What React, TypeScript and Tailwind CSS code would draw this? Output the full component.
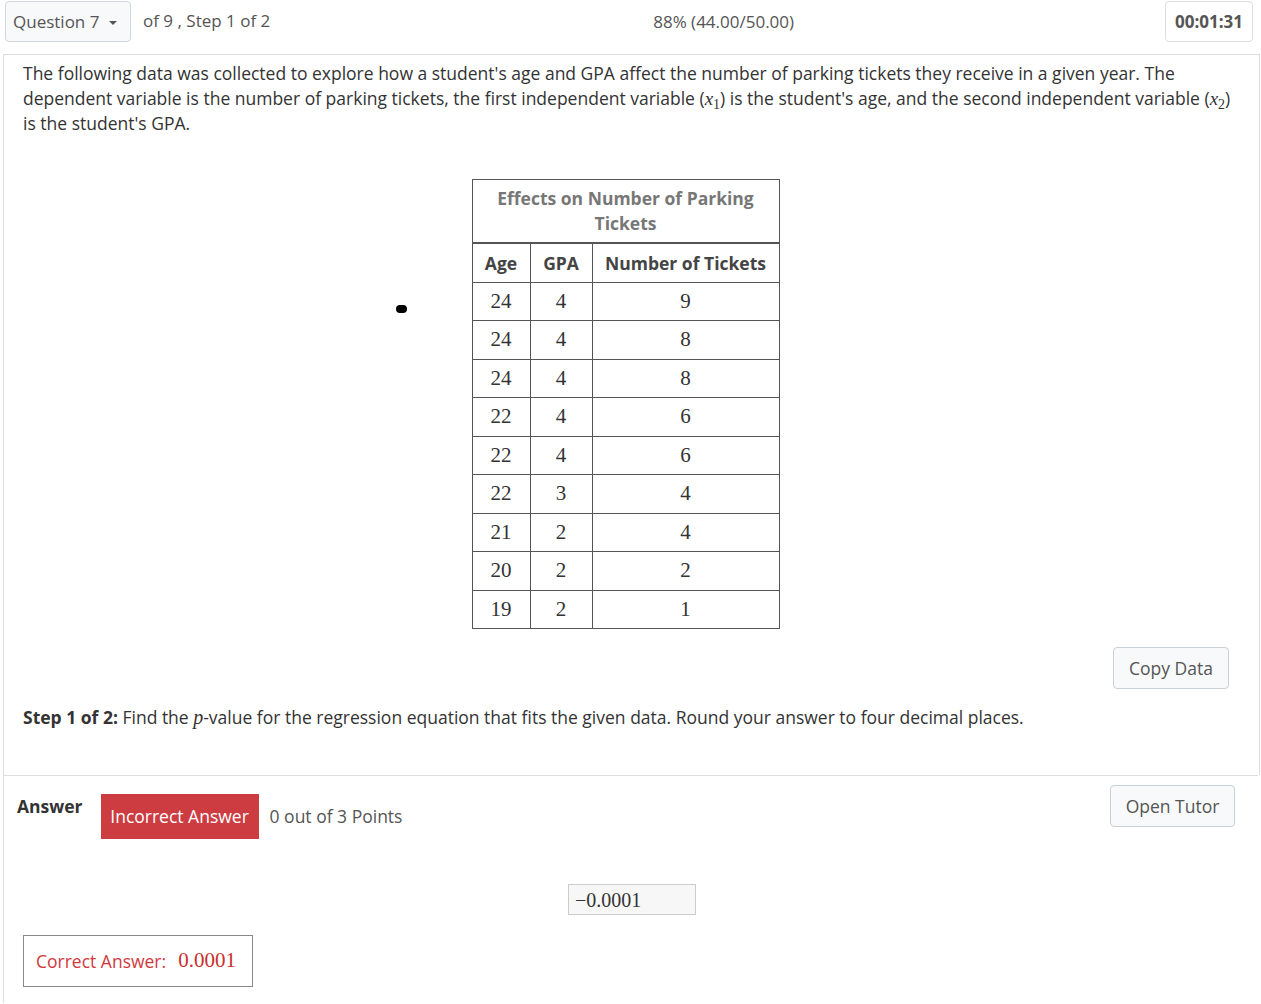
const rows: [number, number, number][] = [
  [24, 4, 9],
  [24, 4, 8],
  [24, 4, 8],
  [22, 4, 6],
  [22, 4, 6],
  [22, 3, 4],
  [21, 2, 4],
  [20, 2, 2],
  [19, 2, 1],
];

const sans = "font-['Open_Sans',sans-serif]";
const serif = "font-['Liberation_Serif',serif]";

function Var({ n }: { n: number }) {
  return (
    <span className={`${serif} whitespace-nowrap leading-none`}>
      <i className="text-[19px] leading-none">x</i>
      <span className="relative top-[4px] text-[14px] leading-none">{n}</span>
    </span>
  );
}

export default function App() {
  return (
    <div className={`${sans} min-h-screen bg-white text-[#333]`}>
      {/* Top bar */}
      <div className="flex h-[54px] items-start">
        <button className="mt-[1px] ml-[5px] flex h-[41px] w-[126px] items-center gap-[10px] rounded border border-[#cfd8e0] bg-[#f8f9fa] pl-[7px] text-[17px] text-[#555]">
          Question 7
          <span className="mt-[2px] h-0 w-0 border-x-[4px] border-t-[4px] border-x-transparent border-t-[#555]" />
        </button>
        <div className="ml-[12px] mt-[8px] text-[17px] text-[#555]">of 9 , Step 1 of 2</div>
        <div className="flex-1 mt-[9px] pl-[12px] text-center text-[17px] text-[#555]">88% (44.00/50.00)</div>
        <div className="mt-[1px] mr-[8px] flex h-[41px] w-[88px] items-center justify-center rounded border border-[#ddd] text-[17px] font-bold text-[#555]">
          00:01:31
        </div>
      </div>

      {/* Question panel */}
      <div className="ml-[3px] mr-[1px] border-x border-t border-[#ddd]">
        <div className="px-[19px] pt-[6px] text-[17.5px] leading-[25px]">
          The following data was collected to explore how a student's age and GPA affect the number of parking tickets they
          receive in a given year. The dependent variable is the number of parking tickets, the first independent variable (
          <Var n={1} />) is the student's age, and the second independent variable (<Var n={2} />) is the student's GPA.
        </div>

        <div className="relative mt-[43px] flex justify-center pr-[12px]">
          <span className="absolute left-[392px] top-[126px] h-[8px] w-[11px] rounded-full bg-black" />
          <table className="border-collapse border border-[#555]">
            <thead>
              <tr>
                <th
                  colSpan={3}
                  className="border-b-2 border-[#555] px-[20px] pt-[6px] pb-[6px] text-[17.5px] leading-[25px] font-bold text-[#777]"
                >
                  Effects on Number of Parking
                  <br />
                  Tickets
                </th>
              </tr>
              <tr className="h-[39px] text-[17.5px] font-bold text-[#444]">
                <th className="w-[58px] border border-[#555] font-bold">Age</th>
                <th className="w-[62px] border border-[#555] font-bold">GPA</th>
                <th className="w-[187px] border border-[#555] font-bold">Number of Tickets</th>
              </tr>
            </thead>
            <tbody className={`${serif} text-[21px] text-[#333]`}>
              {rows.map((r, i) => (
                <tr key={i} className="h-[38.5px]">
                  <td className="border border-[#555] text-center">{r[0]}</td>
                  <td className="border border-[#555] text-center">{r[1]}</td>
                  <td className="border border-[#555] text-center">{r[2]}</td>
                </tr>
              ))}
            </tbody>
          </table>
        </div>

        <div className="mt-[18px] flex justify-end pr-[30px]">
          <button className="h-[42px] w-[116px] rounded border border-[#c6d1da] bg-[#f8f9fa] text-[17.5px] text-[#555]">
            Copy Data
          </button>
        </div>

        <div className="px-[19px] pt-[16px] pb-[45px] text-[17.5px] leading-[25px]">
          <b>Step 1 of 2:</b> Find the <i className={`${serif} text-[20px]`}>p</i>-value for the regression equation that fits the
          given data. Round your answer to four decimal places.
        </div>
      </div>

      {/* Answer area */}
      <div className="mx-[3px] border-l border-t border-[#ddd] pb-[16px]">
        <div className="flex items-start pr-[23px] pt-[9px]">
          <div className="ml-[13px] mt-[8px] text-[17.5px] font-bold">Answer</div>
          <div className="ml-[18px] mt-[9px] flex h-[45px] w-[158px] items-center justify-center bg-[#cc3c41] text-[17.5px] text-white">
            Incorrect Answer
          </div>
          <div className="ml-[11px] mt-[18px] text-[17.5px] text-[#555]">0 out of 3 Points</div>
          <div className="flex-1" />
          <button className="h-[42px] w-[125px] rounded border border-[#c6d1da] bg-[#f8f9fa] text-[17.5px] text-[#555]">
            Open Tutor
          </button>
        </div>

        <div className="mt-[45px] flex justify-center pl-[2px]">
          <div
            className={`${serif} flex h-[31px] w-[128px] items-center border border-[#ccc] bg-[#f7f7f7] pl-[6px] text-[20px] text-[#333]`}
          >
            −0.0001
          </div>
        </div>

        <div className="ml-[19px] mt-[20px] inline-flex h-[52px] w-[230px] items-center border border-[#888] pl-[12px]">
          <span className="text-[17.5px] text-[#d0393e]">Correct Answer:</span>
          <span className={`${serif} ml-[12px] text-[21px] text-[#c9302c]`}>0.0001</span>
        </div>
      </div>
    </div>
  );
}
